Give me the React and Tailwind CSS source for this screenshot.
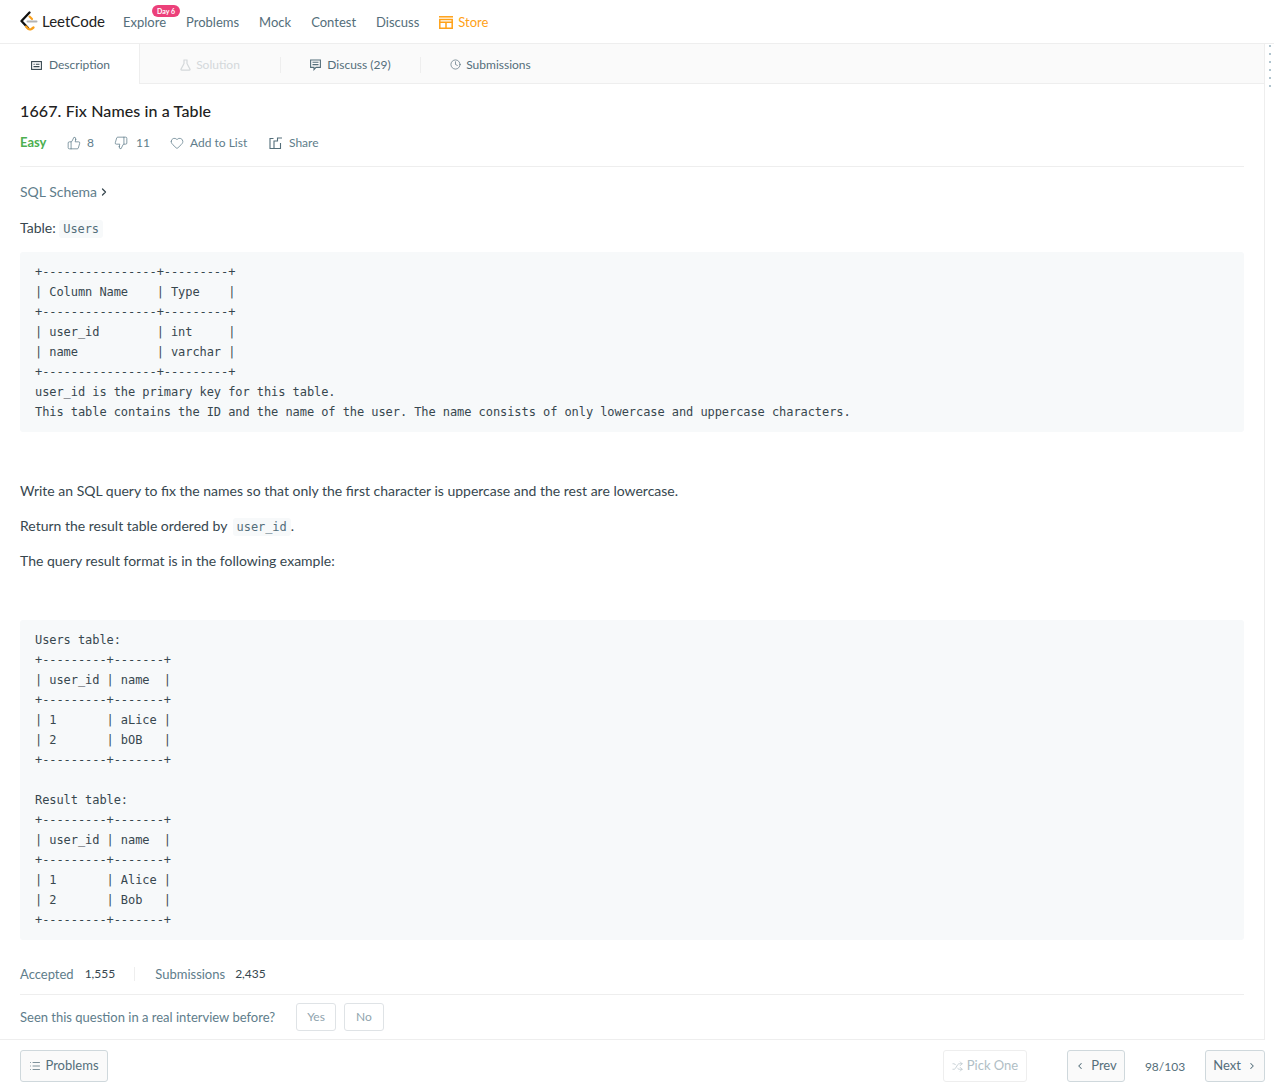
import React from 'react';
import { ThumbsUp, ThumbsDown, Heart, ChevronRight, ChevronLeft, Clock, List, Shuffle } from 'lucide-react';

const schemaCode = `+----------------+---------+
| Column Name    | Type    |
+----------------+---------+
| user_id        | int     |
| name           | varchar |
+----------------+---------+
user_id is the primary key for this table.
This table contains the ID and the name of the user. The name consists of only lowercase and uppercase characters.`;

const exampleCode = `Users table:
+---------+-------+
| user_id | name  |
+---------+-------+
| 1       | aLice |
| 2       | bOB   |
+---------+-------+

Result table:
+---------+-------+
| user_id | name  |
+---------+-------+
| 1       | Alice |
| 2       | Bob   |
+---------+-------+`;

function Logo() {
  return (
    <svg width="18" height="22" viewBox="0 0 18 22" fill="none" className="shrink-0">
      <path d="M9.5 1.5 L1.5 10 L8 17" stroke="#111" strokeWidth="2.3" strokeLinejoin="round" strokeLinecap="round" />
      <path d="M6 15.5 L8 17.6 Q9.5 19 11.5 18 L13.5 16.5" stroke="#f89f1b" strokeWidth="2.3" strokeLinecap="round" strokeLinejoin="round" />
      <path d="M9.5 5.5 L12 8" stroke="#f89f1b" strokeWidth="2.1" strokeLinecap="round" />
      <path d="M7.5 10.5 H16.5" stroke="#b3b3b3" strokeWidth="2" strokeLinecap="round" />
    </svg>
  );
}

function DescriptionIcon() {
  return (
    <svg width="11" height="11" viewBox="0 0 11 11" fill="none" stroke="#37474f" strokeWidth="1.1">
      <rect x="0.6" y="1.6" width="9.8" height="7.8" />
      <path d="M2.5 4.3h1.2M4.8 4.3h3.7M2.5 6.6h6" />
    </svg>
  );
}

function SolutionIcon() {
  return (
    <svg width="11" height="12" viewBox="0 0 11 12" fill="none" stroke="currentColor" strokeWidth="1.2">
      <path d="M3.5 1h4M4 1v3.5L1 10.3q-.3.9.7.9h7.6q1 0 .7-.9L7 4.5V1" />
    </svg>
  );
}

function DiscussIcon() {
  return (
    <svg width="11" height="12" viewBox="0 0 11 12" fill="none" stroke="currentColor" strokeWidth="1.1">
      <path d="M.6 1h9.8v7.4H6L4 10.6V8.4H.6z" />
      <path d="M2.5 3.3h6M2.5 5.6h6" />
    </svg>
  );
}

function ShareIcon() {
  return (
    <svg width="14" height="14" viewBox="0 0 14 14" fill="none" stroke="#546e7a" strokeWidth="1.1">
      <path d="M4.5 2.5H1v10h10.5V7" />
      <path d="M5 12.5V5H8.5V2H13" />
    </svg>
  );
}

function StoreIcon() {
  return (
    <svg width="14" height="13" viewBox="0 0 14 13" fill="none" stroke="#ffa116" strokeWidth="1.5">
      <path d="M0 .8h14" />
      <path d="M.8 3.6h12.4v8.6H.8z" />
      <path d="M.8 6.3h12.4M7 6.3v5.9" />
    </svg>
  );
}

function Tab({ icon, label, muted, width, gap }) {
  return (
    <div className={`h-full flex items-center justify-center pt-[2px] ${width}`}>
      <span className={`flex items-center text-xs ${gap} ${muted ? 'text-[#d4d8da]' : 'text-[#546e7a]'}`}>
        {icon}
        {label}
      </span>
    </div>
  );
}

function Divider() {
  return <div className="w-px h-4 mt-[2px] bg-[#eeeeee]" />;
}

const inlineCode = "px-1 py-[2px] rounded-[3px] bg-[#f7f9fa] text-[#546e7a] font-['DejaVu_Sans_Mono',monospace] text-xs tracking-[-0.07px]";
const blockCode = "px-[15px] py-[10px] rounded-[3px] bg-[#f7f9fa] font-['DejaVu_Sans_Mono',monospace] text-xs leading-5 tracking-[-0.07px] text-[#37474f]";

export default function App() {
  return (
    <div className="w-[1274px] h-[1092px] flex flex-col bg-white overflow-hidden font-['Lato','Open_Sans',sans-serif] text-[#37474f]">
      {/* top nav */}
      <header className="h-[44px] shrink-0 border-b border-[#eeeeee] flex items-center pl-5 pt-[2px] text-[13px] text-[#546e7a]">
        <div className="flex items-center gap-1 w-[103px] -mt-[2px]">
          <Logo />
          <span className="text-[15px] text-[#212121]">LeetCode</span>
        </div>
        <nav className="flex items-center gap-[20px]">
          <span className="relative">
            Explore
            <span className="absolute -top-[8px] left-[29px] h-3 w-7 rounded-full bg-[#ec407a] text-white text-[7px] font-bold leading-3 text-center">Day 6</span>
          </span>
          <span>Problems</span>
          <span>Mock</span>
          <span>Contest</span>
          <span>Discuss</span>
          <span className="flex items-center gap-[5px] text-[#ffa116]"><StoreIcon />Store</span>
        </nav>
      </header>

      {/* panel + splitter */}
      <div className="flex-1 min-h-0 flex">
        <main className="w-[1265px] border-r border-b border-[#eeeeee] flex flex-col">
          <div className="h-[40px] shrink-0 bg-[#fafafa] border-b border-[#eeeeee] flex items-center">
            <div className="h-[40px] w-[140px] pt-px bg-white border-r border-r-[#eeeeee]">
              <Tab width="w-full pl-[2px]" gap="gap-[7px]" icon={<DescriptionIcon />} label="Description" />
            </div>
            <Tab muted width="w-[140px]" gap="gap-[5px]" icon={<SolutionIcon />} label="Solution" />
            <Divider />
            <Tab width="w-[139px]" gap="gap-[6px]" icon={<DiscussIcon />} label="Discuss (29)" />
            <Divider />
            <Tab width="w-[139px]" gap="gap-[5px]" icon={<Clock size={11} strokeWidth={1.5} />} label="Submissions" />
          </div>

          <div className="flex-1 px-5 text-sm leading-5">
            <h1 className="mt-[17px] text-base tracking-[0.12px] leading-[20px] font-medium text-[#212121]">1667. Fix Names in a Table</h1>
            <div className="mt-[12px] h-5 flex items-center text-xs text-[#607d8b]">
              <span className="font-bold text-[13px] text-[#4caf50] w-[47px]">Easy</span>
              <span className="flex items-center gap-[6px] w-[47px]"><ThumbsUp size={14} strokeWidth={1.3} />8</span>
              <span className="flex items-center gap-2 w-[56px]"><ThumbsDown size={14} strokeWidth={1.3} />11</span>
              <span className="flex items-center gap-[6px] w-[99px]"><Heart size={14} strokeWidth={1.3} />Add to List</span>
              <span className="flex items-center gap-[6px]"><ShareIcon />Share</span>
            </div>
            <hr className="mt-[13px] border-[#eeeeee]" />
            <div className="mt-[15px] flex items-center gap-[1px] text-[#607d8b]">SQL Schema <ChevronRight size={12} strokeWidth={2.5} className="text-[#37474f]" /></div>
            <p className="mt-4">
              Table: <code className={inlineCode}>Users</code>
            </p>
            <pre className={`mt-[14px] ${blockCode}`}>{schemaCode}</pre>
            <p className="mt-[49px]">Write an SQL query to fix the names so that only the first character is uppercase and the rest are lowercase.</p>
            <p className="mt-[15px]">
              Return the result table ordered by <code className={`ml-[2px] ${inlineCode}`}>user_id</code>.
            </p>
            <p className="mt-[15px]">The query result format is in the following example:</p>
            <pre className={`mt-[49px] ${blockCode}`}>{exampleCode}</pre>

            <div className="mt-[24px] h-5 flex items-center text-[13px]">
              <span className="text-[#607d8b] mr-[11px]">Accepted</span>
              <span className="text-xs">1,555</span>
              <span className="w-px h-[14px] bg-[#eeeeee] ml-[19px] mr-[20px]" />
              <span className="text-[#607d8b] mr-[10px]">Submissions</span>
              <span className="text-xs">2,435</span>
            </div>
            <hr className="mt-[10px] border-[#eeeeee]" />
            <div className="mt-2 flex items-center text-[13px] text-[#607d8b]">
              <span className="w-[276px]">Seen this question in a real interview before?</span>
              <button className="h-7 w-10 rounded-[3px] border border-[#dfe3e6] text-xs text-[#90a4ae]">Yes</button>
              <button className="ml-2 h-7 w-10 rounded-[3px] border border-[#dfe3e6] text-xs text-[#90a4ae]">No</button>
            </div>
          </div>
        </main>
        <div className="flex-1 flex flex-col items-center gap-[6px] pt-px">
          {[0, 1, 2, 3, 4, 5].map((i) => (
            <span key={i} className="w-[2px] h-[2px] bg-[#b0c4ce]" />
          ))}
        </div>
      </div>

      {/* bottom bar */}
      <footer className="h-[52px] shrink-0 pl-5 pr-[9px] flex items-start pt-[10px] text-[13px] text-[#546e7a]">
        <button className="h-8 w-[88px] rounded-[3px] border border-[#cfd8dc] bg-[#fafafa] flex items-center justify-center gap-[4px]"><List size={12} strokeWidth={1.5} />Problems</button>
        <div className="ml-auto flex items-center">
          <button className="h-8 w-[84px] rounded-[3px] border border-[#eeeeee] text-[#b0bec5] flex items-center justify-center gap-1"><Shuffle size={11} strokeWidth={1.5} />Pick One</button>
          <button className="ml-10 h-8 w-[58px] rounded-[3px] border border-[#cfd8dc] bg-[#fafafa] flex items-center justify-center gap-[6px]"><ChevronLeft size={10} strokeWidth={2.5} />Prev</button>
          <span className="w-20 text-center pt-[2px] text-xs">98/103</span>
          <button className="h-8 w-[60px] rounded-[3px] border border-[#cfd8dc] bg-[#fafafa] flex items-center justify-center gap-[6px]">Next<ChevronRight size={10} strokeWidth={2.5} /></button>
        </div>
      </footer>
    </div>
  );
}
